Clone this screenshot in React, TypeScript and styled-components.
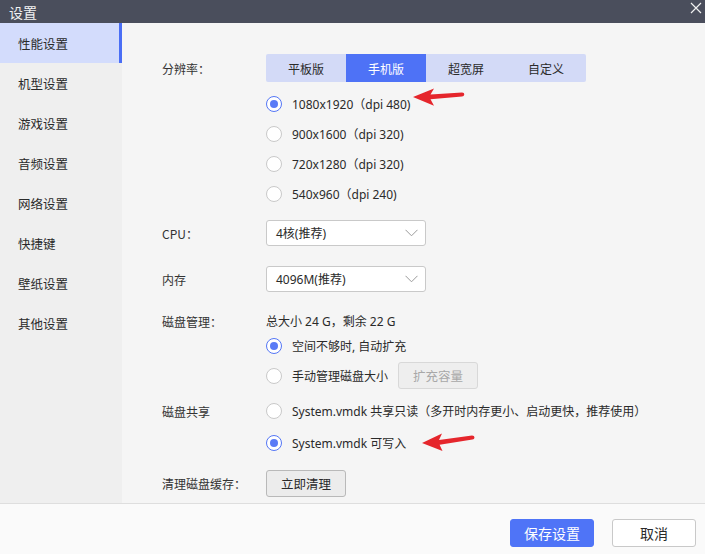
import React from "react";
import styled, { createGlobalStyle } from "styled-components";

const Global = createGlobalStyle`
  html, body { margin: 0; padding: 0; }
  body {
    font-family: "Noto Sans", "Noto Sans CJK SC", sans-serif;
    font-size: 12px;
    color: #333;
    background: #f5f5f5;
  }
  * { box-sizing: border-box; }
`;

const Window = styled.div`
  width: 705px;
  height: 554px;
  display: flex;
  flex-direction: column;
  background: #f5f5f5;
  overflow: hidden;
`;

const TitleBar = styled.div`
  height: 23px;
  flex: none;
  background: #4a4e5c;
  color: #f2f2f2;
  font-size: 14px;
  display: flex;
  align-items: center;
  justify-content: space-between;
  padding: 0 2px 0 9px;
  font-family: "Noto Sans CJK SC", sans-serif;
`;

const CloseButton = styled.span`
  width: 14px;
  height: 14px;
  display: flex;
  align-items: center;
  justify-content: center;
  margin-top: -8px;
`;

const Body = styled.div`
  flex: 1;
  display: flex;
  min-height: 0;
`;

const Sidebar = styled.nav`
  width: 122px;
  flex: none;
  background: #efefef;
  display: flex;
  flex-direction: column;
`;

const NavItem = styled.div<{ $active?: boolean }>`
  height: 40px;
  display: flex;
  align-items: center;
  padding-left: 18px;
  font-size: 12.5px;
  font-family: "Noto Sans CJK SC", sans-serif;
  color: #2a2a2a;
  background: ${(p) => (p.$active ? "#d3dcfc" : "transparent")};
  border-right: 3px solid ${(p) => (p.$active ? "#4a6ef5" : "transparent")};
`;

const Content = styled.main`
  flex: 1;
  position: relative;
  padding: 31px 0 0 40px;
  display: flex;
  flex-direction: column;
`;

const Row = styled.div<{ $h: number; $mt?: number }>`
  display: grid;
  grid-template-columns: 104px auto;
  align-items: center;
  height: ${(p) => p.$h}px;
  margin-top: ${(p) => p.$mt ?? 0}px;
`;

const Label = styled.span`
  color: #333;
  font-family: "Noto Sans CJK SC", sans-serif;
`;

const Control = styled.div`
  display: flex;
  align-items: center;
  height: 100%;
`;

const Segmented = styled.div`
  display: flex;
  height: 28px;
  background: #d3daf7;
  border-radius: 2px;
  overflow: hidden;
`;

const Segment = styled.button<{ $active?: boolean }>`
  width: 80px;
  height: 100%;
  border: none;
  padding: 0;
  font: inherit;
  font-family: "Noto Sans CJK SC", sans-serif;
  background: ${(p) => (p.$active ? "#4e72f6" : "transparent")};
  color: ${(p) => (p.$active ? "#ffffff" : "#2a2a2a")};
`;

const RadioLabel = styled.label`
  display: flex;
  align-items: center;
  gap: 10px;
  color: #2a2a2a;
`;

const RadioCircle = styled.span<{ $checked?: boolean }>`
  width: 16px;
  height: 16px;
  border-radius: 50%;
  background: #fff;
  border: ${(p) => (p.$checked ? "1.5px solid #5476f5" : "1px solid #c9c9c9")};
  display: flex;
  align-items: center;
  justify-content: center;
  flex: none;
  &::after {
    content: "";
    width: 8px;
    height: 8px;
    border-radius: 50%;
    background: #5a7bf6;
    display: ${(p) => (p.$checked ? "block" : "none")};
  }
`;

const Radio = ({ checked, children }: { checked?: boolean; children: React.ReactNode }) => (
  <RadioLabel>
    <RadioCircle $checked={checked} />
    <span>{children}</span>
  </RadioLabel>
);

const SelectBox = styled.div`
  width: 160px;
  height: 26px;
  background: #fff;
  border: 1px solid #c9c9c9;
  border-radius: 3px;
  display: flex;
  align-items: center;
  justify-content: space-between;
  padding: 0 7px 0 9px;
  color: #2a2a2a;
`;

const Chevron = () => (
  <svg width="13" height="8" viewBox="0 0 13 8">
    <path d="M0.5 0.8 L6.5 6.8 L12.5 0.8" fill="none" stroke="#9a9a9a" strokeWidth="1" />
  </svg>
);

const Select = ({ value }: { value: string }) => (
  <SelectBox>
    <span>{value}</span>
    <Chevron />
  </SelectBox>
);

const PlainText = styled.span`
  color: #2a2a2a;
`;

const GrayButton = styled.button<{ $disabled?: boolean }>`
  width: 80px;
  height: 27px;
  font: inherit;
  font-size: 12.5px;
  font-family: "Noto Sans CJK SC", sans-serif;
  border-radius: 3px;
  padding: 0;
  border: 1px solid ${(p) => (p.$disabled ? "#d8d8d8" : "#b9b9b9")};
  background: ${(p) => (p.$disabled ? "#eeeeee" : "#ececec")};
  color: ${(p) => (p.$disabled ? "#a8a8a8" : "#2a2a2a")};
`;

const InlineGroup = styled.div`
  display: flex;
  align-items: center;
  gap: 10px;
`;

const Footer = styled.footer`
  height: 51px;
  flex: none;
  background: #fafafa;
  border-top: 1px solid #dedede;
  display: flex;
  justify-content: flex-end;
  align-items: flex-start;
  padding: 15px 9px 0 0;
  gap: 18px;
`;

const FooterButton = styled.button<{ $primary?: boolean }>`
  width: 84px;
  height: 28px;
  font: inherit;
  font-size: 14px;
  font-family: "Noto Sans CJK SC", sans-serif;
  border-radius: 3px;
  padding: 0;
  border: 1px solid ${(p) => (p.$primary ? "#4f74f7" : "#c9c9c9")};
  background: ${(p) => (p.$primary ? "#4f74f7" : "#ffffff")};
  color: ${(p) => (p.$primary ? "#ffffff" : "#2a2a2a")};
`;

const Arrow = styled.svg<{ $left: number; $top: number }>`
  position: absolute;
  left: ${(p) => p.$left}px;
  top: ${(p) => p.$top}px;
  pointer-events: none;
`;

const navItems = ["性能设置", "机型设置", "游戏设置", "音频设置", "网络设置", "快捷键", "壁纸设置", "其他设置"];

export default function App() {
  return (
    <>
      <Global />
      <Window>
        <TitleBar>
          <span>设置</span>
          <CloseButton>
            <svg width="12" height="12" viewBox="0 0 12 12">
              <path d="M1 1 L11 11 M11 1 L1 11" stroke="#f0f0f0" strokeWidth="1.2" />
            </svg>
          </CloseButton>
        </TitleBar>
        <Body>
          <Sidebar>
            {navItems.map((n, i) => (
              <NavItem key={n} $active={i === 0}>
                {n}
              </NavItem>
            ))}
          </Sidebar>
          <Content>
            <Row $h={28}>
              <Label>分辨率：</Label>
              <Control>
                <Segmented>
                  <Segment>平板版</Segment>
                  <Segment $active>手机版</Segment>
                  <Segment>超宽屏</Segment>
                  <Segment>自定义</Segment>
                </Segmented>
              </Control>
            </Row>
            <Row $h={30} $mt={7}>
              <span />
              <Radio checked>1080x1920（dpi 480)</Radio>
            </Row>
            <Row $h={30}>
              <span />
              <Radio>900x1600（dpi 320)</Radio>
            </Row>
            <Row $h={30}>
              <span />
              <Radio>720x1280（dpi 320)</Radio>
            </Row>
            <Row $h={30}>
              <span />
              <Radio>540x960（dpi 240)</Radio>
            </Row>
            <Row $h={26} $mt={11}>
              <Label>CPU：</Label>
              <Control>
                <Select value="4核(推荐)" />
              </Control>
            </Row>
            <Row $h={26} $mt={20}>
              <Label>内存</Label>
              <Control>
                <Select value="4096M(推荐)" />
              </Control>
            </Row>
            <Row $h={24} $mt={17}>
              <Label>磁盘管理：</Label>
              <PlainText>总大小 24 G，剩余 22 G</PlainText>
            </Row>
            <Row $h={26}>
              <span />
              <Radio checked>空间不够时, 自动扩充</Radio>
            </Row>
            <Row $h={26} $mt={3}>
              <span />
              <InlineGroup>
                <Radio>手动管理磁盘大小</Radio>
                <GrayButton $disabled>扩充容量</GrayButton>
              </InlineGroup>
            </Row>
            <Row $h={26} $mt={10}>
              <Label>磁盘共享</Label>
              <Radio>System.vmdk 共享只读（多开时内存更小、启动更快，推荐使用）</Radio>
            </Row>
            <Row $h={26} $mt={6}>
              <span />
              <Radio checked>System.vmdk 可写入</Radio>
            </Row>
            <Row $h={27} $mt={14}>
              <Label>清理磁盘缓存：</Label>
              <Control>
                <GrayButton>立即清理</GrayButton>
              </Control>
            </Row>

            <Arrow $left={291} $top={64} width="52" height="20" viewBox="0 0 52 20">
              <path
                d="M0 10 L21 1.5 L17.5 7.6 L49 5.6 Q51.5 5.8 51.3 7.6 Q51 9.4 49 9.6 L17.5 12.2 L21 18.8 Z"
                fill="#e5262c"
              />
            </Arrow>
            <Arrow $left={300} $top={409} width="54" height="20" viewBox="0 0 54 20">
              <path
                d="M0 11 L20 1.5 L17 8 L50 3.6 Q52.5 3.6 52.5 5.4 Q52.4 7.3 50.5 7.6 L17.6 12.8 L20.5 19 Z"
                fill="#e5262c"
              />
            </Arrow>
          </Content>
        </Body>
        <Footer>
          <FooterButton $primary>保存设置</FooterButton>
          <FooterButton>取消</FooterButton>
        </Footer>
      </Window>
    </>
  );
}
